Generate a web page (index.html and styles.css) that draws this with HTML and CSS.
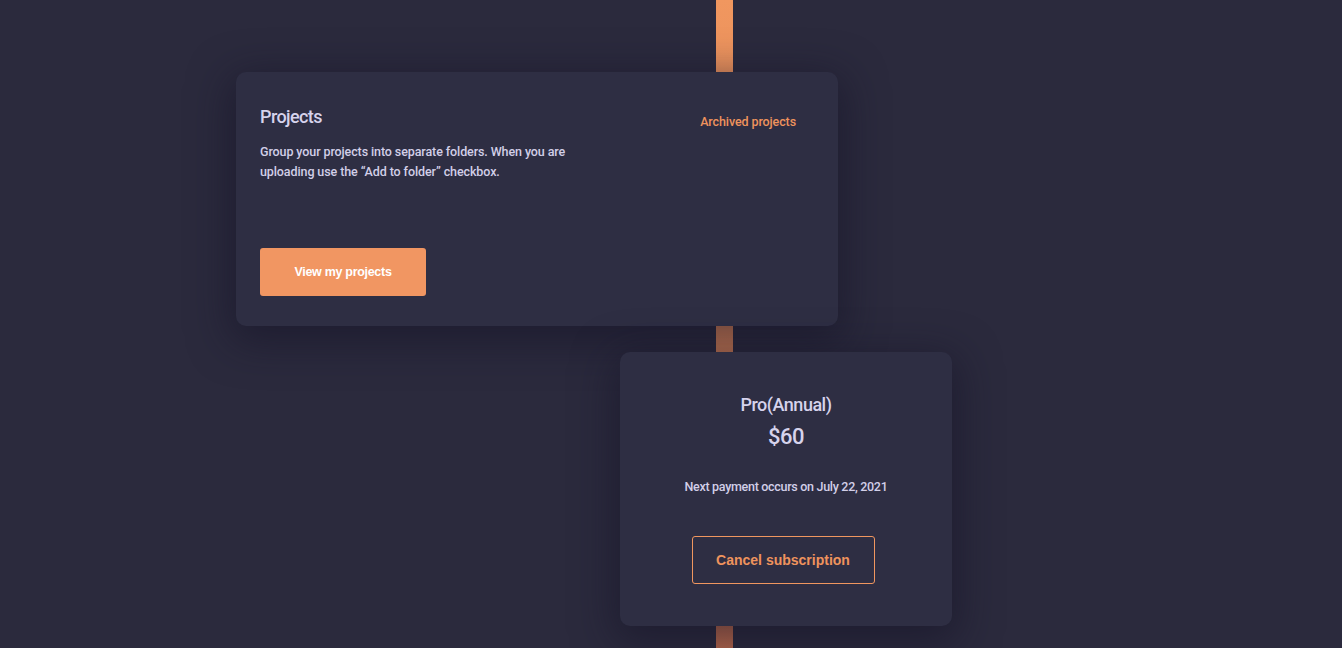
FILE: index.html
```html
<!DOCTYPE html>
<html lang="en">
<head>
<meta charset="utf-8">
<title>Account</title>
<link rel="stylesheet" href="styles.css">
</head>
<body>
<div class="page">
  <div class="timeline"></div>
  <section class="card projects">
    <div class="projects-top">
      <div class="projects-info">
        <h2 class="card-title">Projects</h2>
        <p class="card-text">Group your projects into separate folders. When you are uploading use the “Add to folder” checkbox.</p>
      </div>
      <a class="link-archived" href="#">Archived projects</a>
    </div>
    <button class="btn-primary">View my projects</button>
  </section>
  <section class="card plan">
    <h2 class="plan-name">Pro(Annual)</h2>
    <div class="plan-price">$60</div>
    <p class="plan-next">Next payment occurs on July 22, 2021</p>
    <button class="btn-outline">Cancel subscription</button>
  </section>
</div>
</body>
</html>
```
FILE: styles.css
```css
html, body {
  margin: 0;
  padding: 0;
  background: #2b2a3d;
  height: 100%;
  overflow: hidden;
}
.page {
  position: relative;
  width: 1342px;
  height: 648px;
  padding-top: 72px;
  box-sizing: border-box;
  font-family: Roboto, "Liberation Sans", sans-serif;
  color: #d2cfe8;
}
.timeline {
  position: absolute;
  left: 716px;
  top: 0;
  width: 17px;
  height: 648px;
  background: linear-gradient(to bottom, #f1975f 0%, #d07d55 60%, #b9694c 100%);
  z-index: 0;
}
.card {
  position: relative;
  z-index: 1;
  background: #2e2e43;
  border-radius: 10px;
  box-shadow: 0 10px 40px 6px rgba(20, 19, 38, 0.55);
  box-sizing: border-box;
}
.projects {
  margin-left: 236px;
  width: 602px;
  height: 254px;
  padding: 33px 42px 30px 24px;
  display: flex;
  flex-direction: column;
  justify-content: space-between;
  align-items: flex-start;
}
.projects-top {
  display: flex;
  justify-content: space-between;
  align-items: flex-start;
  width: 100%;
}
.projects-info {
  width: 330px;
}
.card-title {
  margin: 0 0 13px;
  font-size: 18px;
  font-weight: 500;
  line-height: 24px;
  letter-spacing: -0.6px;
  color: #d6d3ec;
}
.card-text {
  margin: 0;
  font-size: 12.5px;
  font-weight: 500;
  line-height: 20px;
  letter-spacing: -0.1px;
}
.link-archived {
  margin-top: 9px;
  color: #ef935d;
  font-size: 12.5px;
  font-weight: 500;
  letter-spacing: -0.1px;
  text-decoration: none;
}
.btn-primary {
  width: 166px;
  height: 48px;
  border: none;
  border-radius: 3px;
  background: #f19662;
  color: #ffffff;
  font-family: "Liberation Sans", Arial, sans-serif;
  font-weight: 700;
  font-size: 12.5px;
  letter-spacing: -0.3px;
  cursor: pointer;
}
.plan {
  margin-top: 26px;
  margin-left: 620px;
  width: 332px;
  height: 274px;
  padding-top: 41px;
  display: flex;
  flex-direction: column;
  align-items: center;
}
.plan-name {
  margin: 0;
  font-size: 18px;
  font-weight: 500;
  line-height: 24px;
  letter-spacing: -0.5px;
  color: #d6d3ec;
}
.plan-price {
  margin-top: 7px;
  font-size: 22px;
  font-weight: 500;
  line-height: 26px;
  letter-spacing: -0.5px;
  color: #d6d3ec;
}
.plan-next {
  margin: 29px 0 0;
  font-size: 12.5px;
  font-weight: 500;
  line-height: 16px;
  letter-spacing: -0.3px;
}
.btn-outline {
  margin-top: 41px;
  margin-right: 6px;
  width: 183px;
  height: 48px;
  background: transparent;
  border: 1px solid #f0965f;
  border-radius: 3px;
  color: #ef935d;
  font-family: "Liberation Sans", Arial, sans-serif;
  font-weight: 700;
  font-size: 14px;
  cursor: pointer;
}
```
